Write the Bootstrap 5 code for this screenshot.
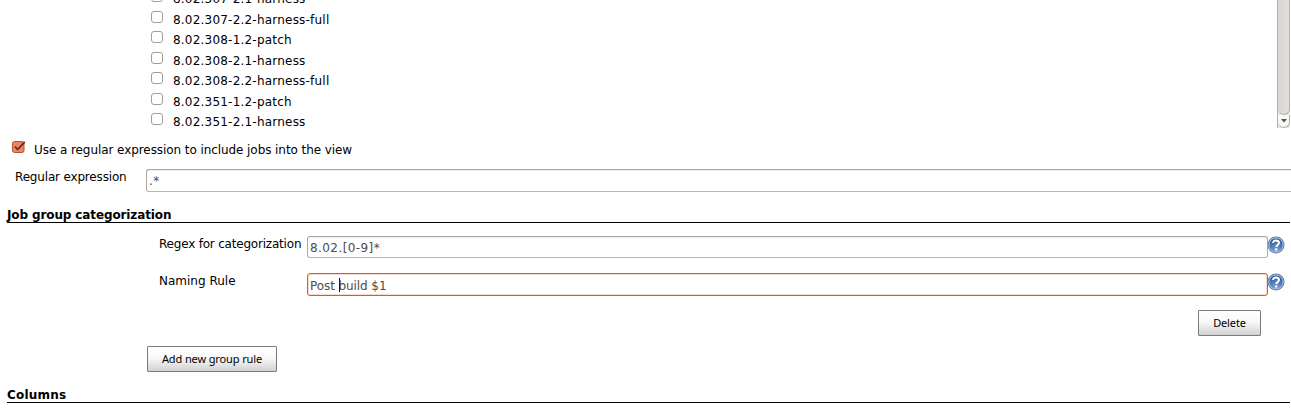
<!DOCTYPE html>
<html lang="en">
<head>
<meta charset="utf-8">
<title>Edit View</title>
<link href="https://cdn.jsdelivr.net/npm/bootstrap@5.3.0/dist/css/bootstrap.min.css" rel="stylesheet">
<style>
body{font:12px/20px "DejaVu Sans",sans-serif;color:#000;background:#fff;height:410px;overflow:hidden}
.jobs{height:128px;padding-left:151px;overflow:hidden}
.job{height:20.5px;flex:none}
.job-name{margin-left:10px;padding-top:4.7px;letter-spacing:.21px}
.tick{appearance:none;display:block;width:12px;height:12px;margin:5.7px 0 0;border:1px solid #a39e98;border-radius:3px;background:#fff;flex:none}
.scroller{width:13px;margin-right:1px;background:#eeecea;border-left:1px solid #b6b0aa;flex:none}
.thumb{flex:1;background:linear-gradient(90deg,#d8d5d2,#e2e0de);border:solid #b6b0aa;border-width:0 1px 1px 0;border-radius:0 0 6px 6px}
.down{height:13px;background:#f8f7f6;border:1px solid #b6b0aa;border-top:0;border-left:0;border-radius:0 0 6px 6px}
.use-regex{height:41px;padding-left:12px;letter-spacing:-.075px}
.use-regex svg{margin-top:12px;flex:none}
.use-regex span{margin:12px 0 0 8px}
.regex-row{height:38px}
.regex-row .caption{width:146px;padding:1px 0 0 15px;letter-spacing:-.17px}
.caption{flex:none;line-height:15px}
.field{height:22px;border:1px solid #aca8a3;border-bottom-color:#b9b5b1;border-radius:3px;padding:1px 2px 0;color:#4c4c4c;box-shadow:inset 0 1px #eeedec;line-height:21px;min-width:0}
.field.active{border-color:#dd5a28;box-shadow:inset 0 0 0 1px #fbd9cb;height:23px;padding-top:2px;letter-spacing:-.08px}
.regex-row .field{height:23px;letter-spacing:.4px}
.heading{margin:0 1px 0 7px;border-bottom:1px solid #000;font-weight:bold;line-height:15px;height:16px;padding-top:1px;letter-spacing:-.12px}
.heading.columns{letter-spacing:.2px}
.rule{height:37px;padding-left:159px;padding-right:5px}
.rule .caption{width:148px;padding-top:1px}
.rule svg{margin:0 1px 0 -1px;flex:none}
.rule .field{margin-right:0}
.push{font:11px/24px "Noto Sans",sans-serif;letter-spacing:-.12px;height:26px;border:1px solid #7b7b7b;border-radius:1px;background:linear-gradient(#fff,#f9f9f9 45%,#d1d1d1);padding:0;color:#000}
.caret{width:1px;height:14px;background:#000;display:inline-block;vertical-align:-2px;margin-right:-1px}
</style>
<script src="https://cdn.jsdelivr.net/npm/bootstrap@5.3.0/dist/js/bootstrap.bundle.min.js"></script>
</head>
<body>
<svg width="0" height="0" class="position-absolute"><defs>
<radialGradient id="ball" cx=".5" cy=".9" r=".9"><stop offset="0" stop-color="#7fa6d8"/><stop offset="1" stop-color="#22508f"/></radialGradient>
<symbol id="help" viewBox="0 0 18 18"><circle cx="9" cy="9" r="8.5" fill="#5678ab"/><circle cx="9" cy="9" r="7.1" fill="url(#ball)" stroke="#b7c9e2" stroke-width="1"/><path d="M6.1 7C6.1 3.5 12 3.6 12 7C12 8.9 9.3 8.8 9.3 11" fill="none" stroke="#fff" stroke-width="2"/><circle cx="9.2" cy="13.4" r="1.2" fill="#fff"/></symbol>
</defs></svg>
<div class="d-flex">
 <div class="jobs flex-grow-1 d-flex flex-column justify-content-end">
  <div class="job d-flex"><input type="checkbox" class="tick"><span class="job-name">8.02.307-2.1-harness</span></div>
  <div class="job d-flex"><input type="checkbox" class="tick"><span class="job-name">8.02.307-2.2-harness-full</span></div>
  <div class="job d-flex"><input type="checkbox" class="tick"><span class="job-name">8.02.308-1.2-patch</span></div>
  <div class="job d-flex"><input type="checkbox" class="tick"><span class="job-name">8.02.308-2.1-harness</span></div>
  <div class="job d-flex"><input type="checkbox" class="tick"><span class="job-name">8.02.308-2.2-harness-full</span></div>
  <div class="job d-flex"><input type="checkbox" class="tick"><span class="job-name">8.02.351-1.2-patch</span></div>
  <div class="job d-flex"><input type="checkbox" class="tick"><span class="job-name">8.02.351-2.1-harness</span></div>
 </div>
 <div class="scroller d-flex flex-column"><div class="thumb"></div><div class="down d-flex justify-content-center align-items-center"><svg width="6" height="4"><path d="M0 0H6L3 3.5Z" fill="#555"/></svg></div></div>
</div>
<div class="use-regex d-flex">
 <svg width="14" height="14"><rect x=".5" y="1.5" width="11.5" height="11" rx="2" fill="#ef8460" stroke="#b65231"/><path d="M3 6.5L5.6 9.5L12.8 1.8" fill="none" stroke="#54332a" stroke-width="1.8"/></svg>
 <span>Use a regular expression to include jobs into the view</span>
</div>
<div class="regex-row d-flex"><span class="caption">Regular expression</span><div class="field flex-grow-1 rounded-end-0 border-end-0">.*</div></div>
<div class="heading">Job group categorization</div>
<div class="rule d-flex" style="margin-top:13px"><span class="caption" style="letter-spacing:-.2px">Regex for categorization</span><div class="field flex-grow-1" style="letter-spacing:.42px">8.02.[0-9]*</div><svg width="18" height="18"><use href="#help"/></svg></div>
<div class="rule d-flex"><span class="caption">Naming Rule</span><div class="field active flex-grow-1">Post <i class="caret"></i>build $1</div><svg width="18" height="18"><use href="#help"/></svg></div>
<div class="d-flex justify-content-end" style="padding-right:30px;height:36px"><button class="push" style="width:63px">Delete</button></div>
<div style="padding-left:147px;height:41px"><button class="push" style="width:130px">Add new group rule</button></div>
<div class="heading columns">Columns</div>
</body>
</html>
